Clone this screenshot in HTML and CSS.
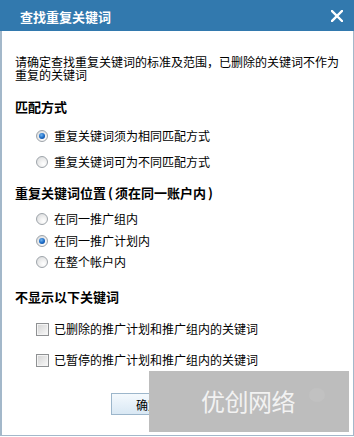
FILE: index.html
```html
<!DOCTYPE html>
<html lang="zh-CN">
<head>
<meta charset="utf-8">
<title>查找重复关键词</title>
<link rel="stylesheet" href="styles.css">
</head>
<body>
<div class="dialog">
  <div class="titlebar">
    <span class="title">查找重复关键词</span>
    <svg class="close" width="12" height="12" viewBox="0 0 12 12"><path d="M1 1 L11 11 M11 1 L1 11" stroke="#fff" stroke-width="2.4" stroke-linecap="square"/></svg>
  </div>
  <div class="content">
    <p class="intro">请确定查找重复关键词的标准及范围，已删除的关键词不作为重复的关键词</p>
    <div class="heading h-first">匹配方式</div>
    <div class="options group1">
      <div class="opt"><span class="radio checked"></span><span>重复关键词须为相同匹配方式</span></div>
      <div class="opt"><span class="radio"></span><span>重复关键词可为不同匹配方式</span></div>
    </div>
    <div class="heading h-second">重复关键词位置<span class="paren">(</span>须在同一账户内<span class="paren">)</span></div>
    <div class="options group2">
      <div class="opt"><span class="radio"></span><span>在同一推广组内</span></div>
      <div class="opt"><span class="radio checked"></span><span>在同一推广计划内</span></div>
      <div class="opt"><span class="radio"></span><span>在整个帐户内</span></div>
    </div>
    <div class="heading h-third">不显示以下关键词</div>
    <div class="options group3">
      <div class="opt"><span class="check"></span><span>已删除的推广计划和推广组内的关键词</span></div>
      <div class="opt"><span class="check"></span><span>已暂停的推广计划和推广组内的关键词</span></div>
    </div>
    <div class="buttons">
      <button class="btn">确定</button>
    </div>
  </div>
  <div class="watermark"><span class="wm-text">优创网络</span><span class="wm-logo"></span></div>
</div>
</body>
</html>
```

FILE: styles.css
```css
html, body {
  margin: 0;
  padding: 0;
  background: #fff;
}
body {
  font-family: "Noto Sans CJK SC", "Liberation Sans", sans-serif;
  font-size: 12px;
  color: #000;
}
.dialog {
  position: relative;
  width: 354px;
  height: 436px;
  box-sizing: border-box;
  display: flex;
  flex-direction: column;
}
.titlebar {
  height: 31px;
  flex: none;
  background: #3279ae;
  display: flex;
  align-items: center;
  justify-content: space-between;
  padding: 0 11px 0 20px;
}
.title {
  color: #fff;
  font-weight: bold;
  font-size: 13px;
  line-height: 16px;
  margin-top: 2px;
}
.close {
  display: block;
}
.content {
  flex: 1;
  border-left: 2px solid #a3b8ca;
  border-right: 1px solid #a3b8ca;
  border-bottom: 1px solid #a3b8ca;
  padding: 24px 12px 0 13px;
}
.intro {
  margin: 0;
  line-height: 13px;
}
.heading {
  font-weight: bold;
  font-size: 13px;
  line-height: 20px;
}
.paren {
  padding: 0 2px;
}
.h-first { margin-top: 16px; }
.h-second { margin-top: 11px; }
.h-third { margin-top: 15px; }
.options {
  padding-left: 21px;
  display: flex;
  flex-direction: column;
}
.opt {
  display: flex;
  align-items: center;
  line-height: 20px;
  height: 20px;
}
.group1 { margin-top: 9px; gap: 6px; }
.group2 { margin-top: 6px; gap: 1.5px; }
.group3 { margin-top: 12px; gap: 11px; }
.radio {
  width: 10px;
  height: 10px;
  border: 1px solid #9ea4aa;
  border-radius: 50%;
  background: radial-gradient(circle at 65% 70%, #ffffff 0, #f2f2f2 35%, #d4d6d8 100%);
  margin-right: 6px;
  position: relative;
  flex: none;
}
.radio.checked::after {
  content: "";
  position: absolute;
  left: 2px;
  top: 2px;
  width: 6px;
  height: 6px;
  border-radius: 50%;
  background: radial-gradient(circle at 40% 35%, #6fb4f0 0, #1766c2 55%, #0b3f86 100%);
}
.check {
  width: 11px;
  height: 11px;
  border: 1px solid #8f9193;
  background: linear-gradient(135deg, #d3d3d3 0%, #e6e6e6 50%, #fafafa 100%);
  box-shadow: inset 0 0 0 1px #f4f4f4;
  margin-right: 5px;
  flex: none;
}
.buttons {
  margin-top: 23px;
  padding-left: 96px;
  display: flex;
}
.btn {
  width: 74px;
  height: 22px;
  border: 1px solid #9cb6cb;
  background: linear-gradient(#f4f9fd, #d9e8f4);
  font-family: "Noto Sans CJK SC", sans-serif;
  font-size: 12px;
  color: #000;
  padding: 0;
}
.watermark {
  position: absolute;
  left: 149px;
  top: 371px;
  width: 200px;
  height: 61px;
  background: #bdbdbd;
}
.wm-text {
  position: absolute;
  left: 52px;
  top: 15px;
  font-size: 24px;
  line-height: 30px;
  color: #f2f2f2;
  letter-spacing: -0.5px;
}
.wm-logo {
  position: absolute;
  left: 160px;
  top: 17px;
  width: 16px;
  height: 14px;
  border-radius: 50%;
  background: #c1c1c1;
}
```
